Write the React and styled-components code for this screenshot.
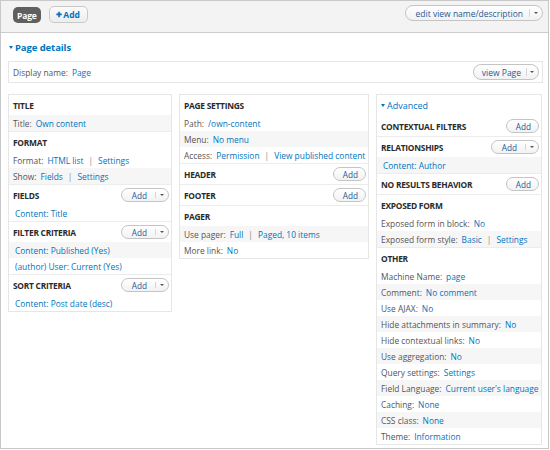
import React from "react";
import styled, { createGlobalStyle } from "styled-components";

const GlobalStyle = createGlobalStyle`
  html, body { margin: 0; padding: 0; background: #fff; }
  body { font-family: "Open Sans", "Noto Sans", sans-serif; }
  * { box-sizing: border-box; }
`;

const Frame = styled.div`
  width: 549px;
  height: 449px;
  border: 1px solid #c8c8c8;
  display: flex;
  flex-direction: column;
  overflow: hidden;
`;

const TopBar = styled.div`
  height: 32px;
  flex: none;
  background: #f3f3f3;
  border-bottom: 1px solid #cccccc;
  display: flex;
  align-items: flex-start;
  padding: 4px 5px 0 12px;
`;

const Tab = styled.div`
  margin-top: 2px;
  height: 16px;
  padding: 0 4px;
  border-radius: 5px;
  background: #5f5f5f;
  color: #fff;
  font-size: 8.5px;
  font-weight: 700;
  display: flex;
  align-items: center;
  letter-spacing: -0.02em;
`;

const AddTab = styled.div`
  margin-left: 8px;
  margin-top: 1px;
  height: 17px;
  width: 39px;
  justify-content: center;
  border-radius: 5px;
  border: 1px solid #c9c9c9;
  background: linear-gradient(#fbfbfb, #ededed);
  color: #0074bd;
  font-size: 8.5px;
  font-weight: 700;
  display: flex;
  align-items: center;
  gap: 1px;
`;

const Plus = styled.span`
  font-size: 7px;
`;

const Spacer = styled.div`
  flex: 1;
`;

const Pill = styled.div`
  height: ${(p) => p.$h || 15}px;
  border: 1px solid #c4c4c4;
  border-radius: 9px;
  background: linear-gradient(#ffffff, #f2f2f2);
  display: flex;
  align-items: stretch;
  color: #1e5a96;
  font-size: ${(p) => p.$fs || 8}px;
  flex: none;
`;

const PillLabel = styled.span`
  display: flex;
  align-items: center;
  padding: 0 ${(p) => p.$pr ?? 7}px 0 ${(p) => p.$pl ?? 7}px;
`;

const PillArrow = styled.span`
  display: flex;
  align-items: center;
  justify-content: center;
  width: ${(p) => p.$w || 13}px;
  position: relative;
  &::before {
    content: "";
    position: absolute;
    left: 0;
    top: 3px;
    bottom: 3px;
    width: 1px;
    background: #d6d6d6;
  }
  &::after {
    content: "";
    border-left: 2.5px solid transparent;
    border-right: 2.5px solid transparent;
    border-top: 2.5px solid #555;
  }
`;

const Content = styled.div`
  flex: 1;
  padding: 0 5px 0 7px;
  display: flex;
  flex-direction: column;
`;

const DetailsHead = styled.div`
  margin-top: 8px;
  height: 12px;
  display: flex;
  align-items: center;
  color: #0074bd;
  font-size: 9.5px;
  font-weight: 700;
  letter-spacing: -0.01em;
`;

const Caret = styled.span`
  display: inline-block;
  border-left: 2.5px solid transparent;
  border-right: 2.5px solid transparent;
  border-top: 3px solid #0074bd;
  margin: 0 2px 0 1px;
`;

const NameBox = styled.div`
  margin-top: 8px;
  height: 22px;
  border: 1px solid #e6e6e6;
  display: flex;
  align-items: center;
  padding: 0 3px 0 4px;
  font-size: 8.4px;
  color: #555;
`;

const Columns = styled.div`
  margin-top: 11px;
  display: grid;
  grid-template-columns: 164px 190px 166px;
  column-gap: 7px;
  align-items: start;
`;

const Column = styled.div`
  border: 1px solid #e6e6e6;
`;

const Bucket = styled.div`
  border-top: ${(p) => (p.$first ? "none" : "1px solid #ececec")};
`;

const BucketHead = styled.div`
  height: 20px;
  display: flex;
  align-items: center;
  justify-content: space-between;
  padding: 0 2px 0 4px;
`;

const Title = styled.h3`
  margin: 0;
  font-size: 8.4px;
  font-weight: 700;
  text-transform: uppercase;
  letter-spacing: -0.03em;
  color: #2b2b2b;
`;

const Row = styled.div`
  height: 16px;
  display: flex;
  align-items: center;
  padding-left: ${(p) => (p.$indent ? 6 : 4)}px;
  background: ${(p) => (p.$alt ? "#f6f6f6" : "#fff")};
  font-size: 8.4px;
  color: #555;
  white-space: nowrap;
`;

const Label = styled.span`
  margin-right: 4px;
`;

const Link = styled.span`
  color: #0074bd;
`;

const Sep = styled.span`
  color: #888;
  margin: 0 5px;
`;

const AdvancedToggle = styled.div`
  height: 21px;
  display: flex;
  align-items: center;
  padding-left: 3px;
  color: #0074bd;
  font-size: 9px;
`;

function AddButton({ dropdown }) {
  return (
    <Pill $h={14} $fs={8.2}>
      <PillLabel $pl={dropdown ? 10 : 9} $pr={dropdown ? 8 : 7}>Add</PillLabel>
      {dropdown && <PillArrow $w={13} />}
    </Pill>
  );
}

function Setting({ label, values, alt, indent }) {
  return (
    <Row $alt={alt} $indent={indent}>
      {label && <Label>{label}:</Label>}
      {values.map((v, i) => (
        <React.Fragment key={i}>
          {i > 0 && <Sep>|</Sep>}
          <Link>{v}</Link>
        </React.Fragment>
      ))}
    </Row>
  );
}

function BucketBlock({ title, add, dropdown, rows = [], first }) {
  return (
    <Bucket $first={first}>
      <BucketHead>
        <Title>{title}</Title>
        {add && <AddButton dropdown={dropdown} />}
      </BucketHead>
      {rows.map((r, i) => (
        <Setting key={i} {...r} />
      ))}
    </Bucket>
  );
}

const col1 = [
  { title: "Title", rows: [{ label: "Title", values: ["Own content"], alt: true }] },
  {
    title: "Format",
    rows: [
      { label: "Format", values: ["HTML list", "Settings"] },
      { label: "Show", values: ["Fields", "Settings"], alt: true },
    ],
  },
  { title: "Fields", add: true, dropdown: true, rows: [{ values: ["Content: Title"], indent: true }] },
  {
    title: "Filter criteria",
    add: true,
    dropdown: true,
    rows: [
      { values: ["Content: Published (Yes)"], indent: true, alt: true },
      { values: ["(author) User: Current (Yes)"], indent: true },
    ],
  },
  { title: "Sort criteria", add: true, dropdown: true, rows: [{ values: ["Content: Post date (desc)"], indent: true }] },
];

const col2 = [
  {
    title: "Page settings",
    rows: [
      { label: "Path", values: ["/own-content"] },
      { label: "Menu", values: ["No menu"], alt: true },
      { label: "Access", values: ["Permission", "View published content"] },
    ],
  },
  { title: "Header", add: true },
  { title: "Footer", add: true },
  {
    title: "Pager",
    rows: [
      { label: "Use pager", values: ["Full", "Paged, 10 items"], alt: true },
      { label: "More link", values: ["No"] },
    ],
  },
];

const otherRows = [
  ["Machine Name", "page"],
  ["Comment", "No comment"],
  ["Use AJAX", "No"],
  ["Hide attachments in summary", "No"],
  ["Hide contextual links", "No"],
  ["Use aggregation", "No"],
  ["Query settings", "Settings"],
  ["Field Language", "Current user's language"],
  ["Caching", "None"],
  ["CSS class", "None"],
  ["Theme", "Information"],
].map(([label, v], i) => ({ label, values: [v], alt: i % 2 === 1 }));

const col3 = [
  { title: "Contextual filters", add: true, first: true },
  { title: "Relationships", add: true, dropdown: true, rows: [{ values: ["Content: Author"], indent: true, alt: true }] },
  { title: "No results behavior", add: true },
  {
    title: "Exposed form",
    rows: [
      { label: "Exposed form in block", values: ["No"] },
      { label: "Exposed form style", values: ["Basic", "Settings"], alt: true },
    ],
  },
  { title: "Other", rows: otherRows },
];

export default function App() {
  return (
    <>
      <GlobalStyle />
      <Frame>
        <TopBar>
          <Tab>Page</Tab>
          <AddTab>
            <Plus>✚</Plus>
            <span>Add</span>
          </AddTab>
          <Spacer />
          <Pill $h={16} $fs={8.5}>
            <PillLabel $pl={10} $pr={6}>edit view name/description</PillLabel>
            <PillArrow $w={13} />
          </Pill>
        </TopBar>
        <Content>
          <DetailsHead>
            <Caret />
            Page details
          </DetailsHead>
          <NameBox>
            <Label>Display name:</Label>
            <Link>Page</Link>
            <Spacer />
            <Pill $h={16} $fs={8.5}>
              <PillLabel $pl={8} $pr={5}>view Page</PillLabel>
              <PillArrow $w={12} />
            </Pill>
          </NameBox>
          <Columns>
            <Column>
              {col1.map((b, i) => (
                <BucketBlock key={i} first={i === 0} {...b} />
              ))}
            </Column>
            <Column>
              {col2.map((b, i) => (
                <BucketBlock key={i} first={i === 0} {...b} />
              ))}
            </Column>
            <Column>
              <AdvancedToggle>
                <Caret />
                Advanced
              </AdvancedToggle>
              {col3.map((b, i) => (
                <BucketBlock key={i} {...b} />
              ))}
            </Column>
          </Columns>
        </Content>
      </Frame>
    </>
  );
}
